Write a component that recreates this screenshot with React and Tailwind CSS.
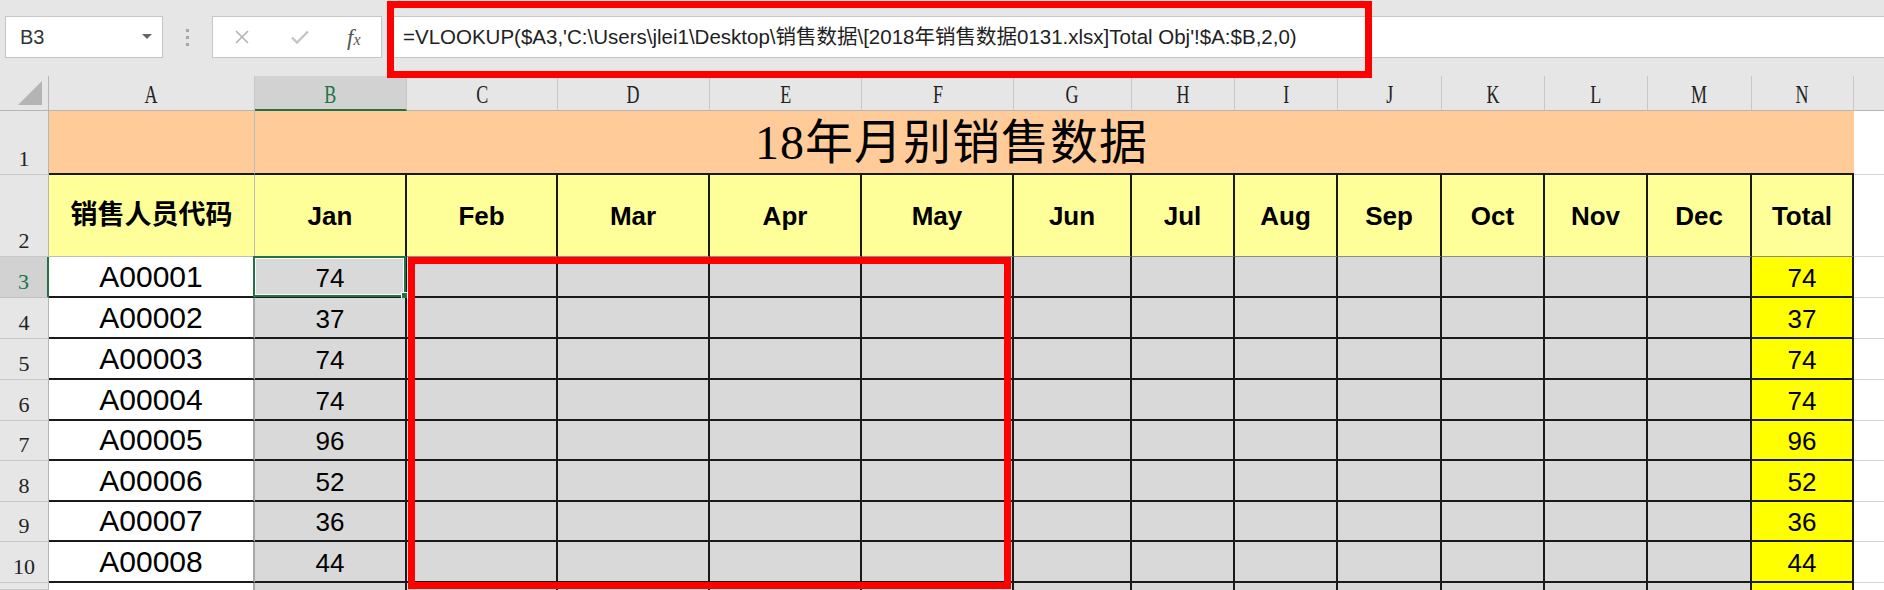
const COLS = ["A", "B", "C", "D", "E", "F", "G", "H", "I", "J", "K", "L", "M", "N"];
const MONTHS = ["Jan", "Feb", "Mar", "Apr", "May", "Jun", "Jul", "Aug", "Sep", "Oct", "Nov", "Dec"];
const ROWS = [
  ["A00001", 74],
  ["A00002", 37],
  ["A00003", 74],
  ["A00004", 74],
  ["A00005", 96],
  ["A00006", 52],
  ["A00007", 36],
  ["A00008", 44],
];

const FORMULA =
  "=VLOOKUP($A3,'C:\\Users\\jlei1\\Desktop\\销售数据\\[2018年销售数据0131.xlsx]Total Obj'!$A:$B,2,0)";

function FormulaBar() {
  return (
    <div className="h-[76px] bg-[#e6e6e6] flex items-start pt-[16px]">
      {/* Name box */}
      <div className="ml-[5px] w-[158px] h-[42px] bg-white border border-[#c6c6c6] flex items-center justify-between pl-[14px] pr-[10px]">
        <span className="text-[20px] text-[#333]">B3</span>
        <svg width="10" height="6" viewBox="0 0 10 6">
          <polygon points="0,0 10,0 5,5" fill="#666" />
        </svg>
      </div>

      {/* Grip dots */}
      <div className="w-[49px] h-[42px] flex flex-col items-center justify-center gap-[4px]">
        <span className="w-[3px] h-[3px] bg-[#a6a6a6]"></span>
        <span className="w-[3px] h-[3px] bg-[#a6a6a6]"></span>
        <span className="w-[3px] h-[3px] bg-[#a6a6a6]"></span>
      </div>

      {/* Cancel / enter / fx */}
      <div className="w-[170px] h-[42px] bg-white border border-[#c6c6c6] flex items-center">
        <svg className="ml-[21px]" width="16" height="16" viewBox="0 0 16 16">
          <path d="M2 2 L14 14 M14 2 L2 14" stroke="#b3b3b3" strokeWidth="1.6" fill="none" />
        </svg>
        <svg className="ml-[40px]" width="20" height="16" viewBox="0 0 20 16">
          <path d="M2 8.5 L7 13.5 L18 2.5" stroke="#c4c4c4" strokeWidth="2.4" fill="none" />
        </svg>
        <span className="ml-[37px] font-['Liberation_Serif',serif] italic text-[#555] text-[23px] leading-none">
          f<span className="text-[16px]">x</span>
        </span>
      </div>

      {/* Formula input */}
      <div className="ml-[6px] flex-1 h-[42px] bg-white border-y border-l border-[#c6c6c6] flex items-center pl-[14px]">
        <span className="text-[20.5px] text-[#222] whitespace-nowrap">{FORMULA}</span>
      </div>
    </div>
  );
}

function RowHead({ n, active }) {
  return (
    <div
      className={
        "flex items-end justify-center pb-[4px] font-['Liberation_Serif',serif] text-[22px] leading-none " +
        (active
          ? "bg-[#d2d2d2] text-[#217346] border-r-2 border-r-[#217346] border-b border-b-[#c0c0c0]"
          : "bg-[#e6e6e6] text-[#222] border-r border-r-[#b5b5b5] border-b border-b-[#c8c8c8]")
      }
    >
      {n}
    </div>
  );
}

function Sheet() {
  return (
    <div className="grid grid-cols-[49px_206px_152px_151px_152px_152px_152px_118px_103px_103px_104px_103px_103px_104px_102px_1fr] grid-rows-[35px_64px_82px_41px_41px_41px_41px_40px_41px_40px_41px_7px]">
      {/* Column headers */}
      <div className="bg-[#e6e6e6] border-r border-b border-[#b5b5b5] flex items-end justify-end pr-[6px] pb-[5px]">
        <svg width="24" height="24" viewBox="0 0 24 24">
          <polygon points="24,0 24,24 0,24" fill="#b4b4b4" />
        </svg>
      </div>
      {COLS.map((c) => (
        <div
          key={c}
          className={
            "flex items-center justify-center pt-[3px] border-r border-r-[#c8c8c8] " +
            (c === "B"
              ? "bg-[#d2d2d2] text-[#217346] border-b-2 border-b-[#217346]"
              : "bg-[#e6e6e6] text-[#222] border-b border-b-[#b5b5b5]")
          }
        >
          <span className="inline-block font-['Liberation_Serif',serif] text-[25px] leading-none scale-x-[0.72]">{c}</span>
        </div>
      ))}
      <div className="bg-[#e6e6e6] border-b border-[#b5b5b5]"></div>

      {/* Row 1: title */}
      <RowHead n={1} />
      <div className="bg-[#ffcc99] border-r border-r-[#bdbdbd] border-b-2 border-b-[#1a1a1a]"></div>
      <div className="col-[span_13/span_13] bg-[#ffcc99] border-b-2 border-b-[#1a1a1a] flex items-center justify-center pr-[206px] pt-[2px]">
        <span className="font-['Liberation_Serif','Noto_Sans_CJK_SC',serif] text-[48px] leading-none text-black tracking-[1px]">
          18年月别销售数据
        </span>
      </div>
      <div className="bg-white border-b border-[#d4d4d4]"></div>

      {/* Row 2: headers */}
      <RowHead n={2} />
      <div className="bg-[#ffff99] border-r border-r-[#bdbdbd] border-b border-b-[#bdbdbd] flex items-center justify-center">
        <span className="font-['Liberation_Sans','Noto_Sans_CJK_SC',sans-serif] font-bold text-[27px] text-black">销售人员代码</span>
      </div>
      {[...MONTHS, "Total"].map((m) => (
        <div
          key={m}
          className="bg-[#ffff99] border-r-2 border-r-[#1a1a1a] border-b border-b-[#8c8c8c] flex items-center justify-center pt-[2px]"
        >
          <span className="font-['Liberation_Sans',sans-serif] font-bold text-[26px] text-black">{m}</span>
        </div>
      ))}
      <div className="bg-white border-b border-[#d4d4d4]"></div>

      {/* Data rows */}
      {ROWS.map(([code, v], i) => (
        <DataRow key={code} n={i + 3} code={code} v={v} active={i === 0} />
      ))}
      <DataRow n="" last />
    </div>
  );
}

function DataRow({ n, code, v, active, last }) {
  const bb = last ? "" : " border-b-2 border-b-[#1a1a1a]";
  return (
    <>
      <RowHead n={n} active={active} />
      <div className={"bg-white border-r-2 border-r-[#a8a8a8] flex items-center justify-center" + bb}>
        <span className="font-['Liberation_Sans',sans-serif] text-[30px] leading-none text-black">{code}</span>
      </div>
      <div className={"relative bg-[#d9d9d9] border-r-2 border-r-[#1a1a1a] flex items-center justify-center pt-[2px]" + bb}>
        <span className="font-['Liberation_Sans',sans-serif] text-[26px] leading-none text-black">{v}</span>
        {active && (
          <div className="absolute -left-[2px] -top-[1px] -right-[1px] -bottom-[1px] border-2 border-[#217346]">
            <div className="absolute inset-0 border border-white"></div>
            <div className="absolute -right-[4px] -bottom-[4px] w-[7px] h-[7px] bg-[#217346] border border-white"></div>
          </div>
        )}
      </div>
      {MONTHS.slice(1).map((m) => (
        <div key={m} className={"bg-[#d9d9d9] border-r-2 border-r-[#1a1a1a]" + bb}></div>
      ))}
      <div className={"bg-[#ffff00] border-r-2 border-r-[#1a1a1a] flex items-center justify-center pt-[2px]" + bb}>
        <span className="font-['Liberation_Sans',sans-serif] text-[26px] leading-none text-black">{v}</span>
      </div>
      <div className={"bg-white" + (last ? "" : " border-b border-[#d4d4d4]")}></div>
    </>
  );
}

export default function App() {
  return (
    <div className="relative w-[1884px] h-[590px] overflow-hidden bg-white font-['Liberation_Sans','Noto_Sans_CJK_SC',sans-serif]">
      <FormulaBar />
      <Sheet />

      {/* Red annotation boxes */}
      <div className="absolute left-[387px] top-[1px] w-[985px] h-[77px] border-[7px] border-[#ff0000]"></div>
      <div className="absolute left-[408px] top-[257px] w-[603px] h-[332px] border-[7px] border-[#ff0000]"></div>
    </div>
  );
}
